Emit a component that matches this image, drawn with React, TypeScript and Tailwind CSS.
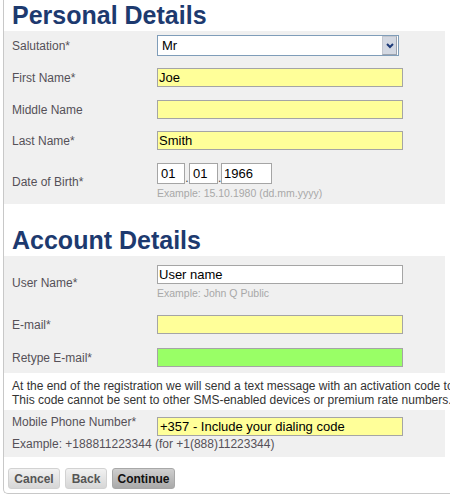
import React from 'react';

const inputBase = 'h-[19px] w-[246px] border border-[#a5a5a5] px-[1px] text-[13px] leading-[17px] text-black';

function Row({ label, children, className = '' }: { label: string; children: React.ReactNode; className?: string }) {
  return (
    <div className={`grid grid-cols-[145px_1fr] items-center ${className}`}>
      <span className="text-[12px] leading-[14px] text-[#555058]">{label}</span>
      <div>{children}</div>
    </div>
  );
}

const App: React.FC = () => {
  return (
    <div className="h-[498px] w-[450px] overflow-hidden bg-white font-['Liberation_Sans',Arial,sans-serif]">
      <div className="ml-[3px] w-[620px] rounded-bl-[5px] border-b border-l border-[#c8c8c8] pb-[4px]">
        <h1 className="pl-[8px] text-[25px] font-bold leading-[31px] text-[#1d3a6f]">Personal Details</h1>

        <div className="w-[441px] bg-[#f0f0f0] pb-[4px] pl-[8px] pt-[4px]">
          <Row label="Salutation*">
            <div className="flex h-[21px] w-[242px] items-center justify-between border border-[#7f9db9] bg-white pl-[4px] pr-[1px]">
              <span className="text-[13px] leading-[17px] text-black">Mr</span>
              <span className="flex h-[19px] w-[15px] items-center justify-center border border-[#c3c7cf] border-b-[#9da3ae] border-r-[#9da3ae] bg-[#d3d8e2]">
                <svg width="8" height="6" viewBox="0 0 8 6">
                  <polyline points="1,1 4,4 7,1" fill="none" stroke="#1d3a78" strokeWidth="2" />
                </svg>
              </span>
            </div>
          </Row>
          <Row label="First Name*" className="mt-[12px]">
            <div className={`${inputBase} bg-[#ffff99]`}>Joe</div>
          </Row>
          <Row label="Middle Name" className="mt-[13px]">
            <div className={`${inputBase} bg-[#ffff99]`} />
          </Row>
          <Row label="Last Name*" className="mt-[12px]">
            <div className={`${inputBase} bg-[#ffff99]`}>Smith</div>
          </Row>
          <Row label="Date of Birth*" className="mt-[13px]">
            <div className="flex items-end">
              <div className="h-[21px] w-[28px] border border-[#a5a5a5] bg-white pl-[3px] text-[13px] leading-[19px] text-black">01</div>
              <span className="w-[4px] text-center text-[12px] leading-[12px] text-[#444]">.</span>
              <div className="h-[21px] w-[29px] border border-[#a5a5a5] bg-white pl-[3px] text-[13px] leading-[19px] text-black">01</div>
              <span className="w-[3px] text-center text-[12px] leading-[12px] text-[#444]">.</span>
              <div className="h-[21px] w-[51px] border border-[#a5a5a5] bg-white pl-[2px] text-[13px] leading-[19px] text-black">1966</div>
            </div>
            <p className="mt-[2px] text-[10.5px] leading-[14px] text-[#a8a8a8]">Example: 15.10.1980 (dd.mm.yyyy)</p>
          </Row>
        </div>

        <h2 className="mt-[21px] pl-[8px] text-[25px] font-bold leading-[31px] text-[#1d3a6f]">Account Details</h2>

        <div className="w-[441px] bg-[#f0f0f0] pb-[6px] pl-[8px] pt-[9px]">
          <Row label="User Name*">
            <div className={`${inputBase} bg-white`}>User name</div>
            <p className="mt-[2px] text-[10.5px] leading-[14px] text-[#a8a8a8]">Example: John Q Public</p>
          </Row>
          <Row label="E-mail*" className="mt-[15px]">
            <div className={`${inputBase} bg-[#ffff99]`} />
          </Row>
          <Row label="Retype E-mail*" className="mt-[14px]">
            <div className={`${inputBase} bg-[#99ff66]`} />
          </Row>
        </div>

        <p className="whitespace-nowrap pb-[3px] pl-[8px] pt-[6px] text-[12px] leading-[14px] text-[#333]">
          At the end of the registration we will send a text message with an activation code to your mobile phone.
          <br />
          This code cannot be sent to other SMS-enabled devices or premium rate numbers.
        </p>

        <div className="w-[441px] bg-[#f0f0f0] pb-[6px] pl-[8px] pt-[5px]">
          <div className="grid grid-cols-[145px_1fr] items-start">
            <span className="text-[12px] leading-[14px] text-[#555058]">Mobile Phone Number*</span>
            <div className={`${inputBase} mt-[2px] bg-[#ffff99] pl-[2px]`}>+357 - Include your dialing code</div>
          </div>
          <p className="mt-[1px] text-[12px] leading-[14px] text-[#555058]">
            Example: +188811223344 (for +1(888)11223344)
          </p>
        </div>

        <div className="mt-[11px] flex gap-[5px] pl-[4px]">
          <button className="h-[21px] w-[52px] rounded-[3px] border border-[#d2d2d2] bg-gradient-to-b from-[#f2f2f2] to-[#d6d6d6] text-[12px] font-bold text-[#555]">
            Cancel
          </button>
          <button className="h-[21px] w-[42px] rounded-[3px] border border-[#d2d2d2] bg-gradient-to-b from-[#f2f2f2] to-[#d6d6d6] text-[12px] font-bold text-[#555]">
            Back
          </button>
          <button className="h-[21px] w-[63px] rounded-[3px] border border-[#a8a8a8] bg-gradient-to-b from-[#cfcfcf] to-[#a9a9a9] text-[12px] font-bold text-[#111]">
            Continue
          </button>
        </div>
      </div>
    </div>
  );
};

export default App;
